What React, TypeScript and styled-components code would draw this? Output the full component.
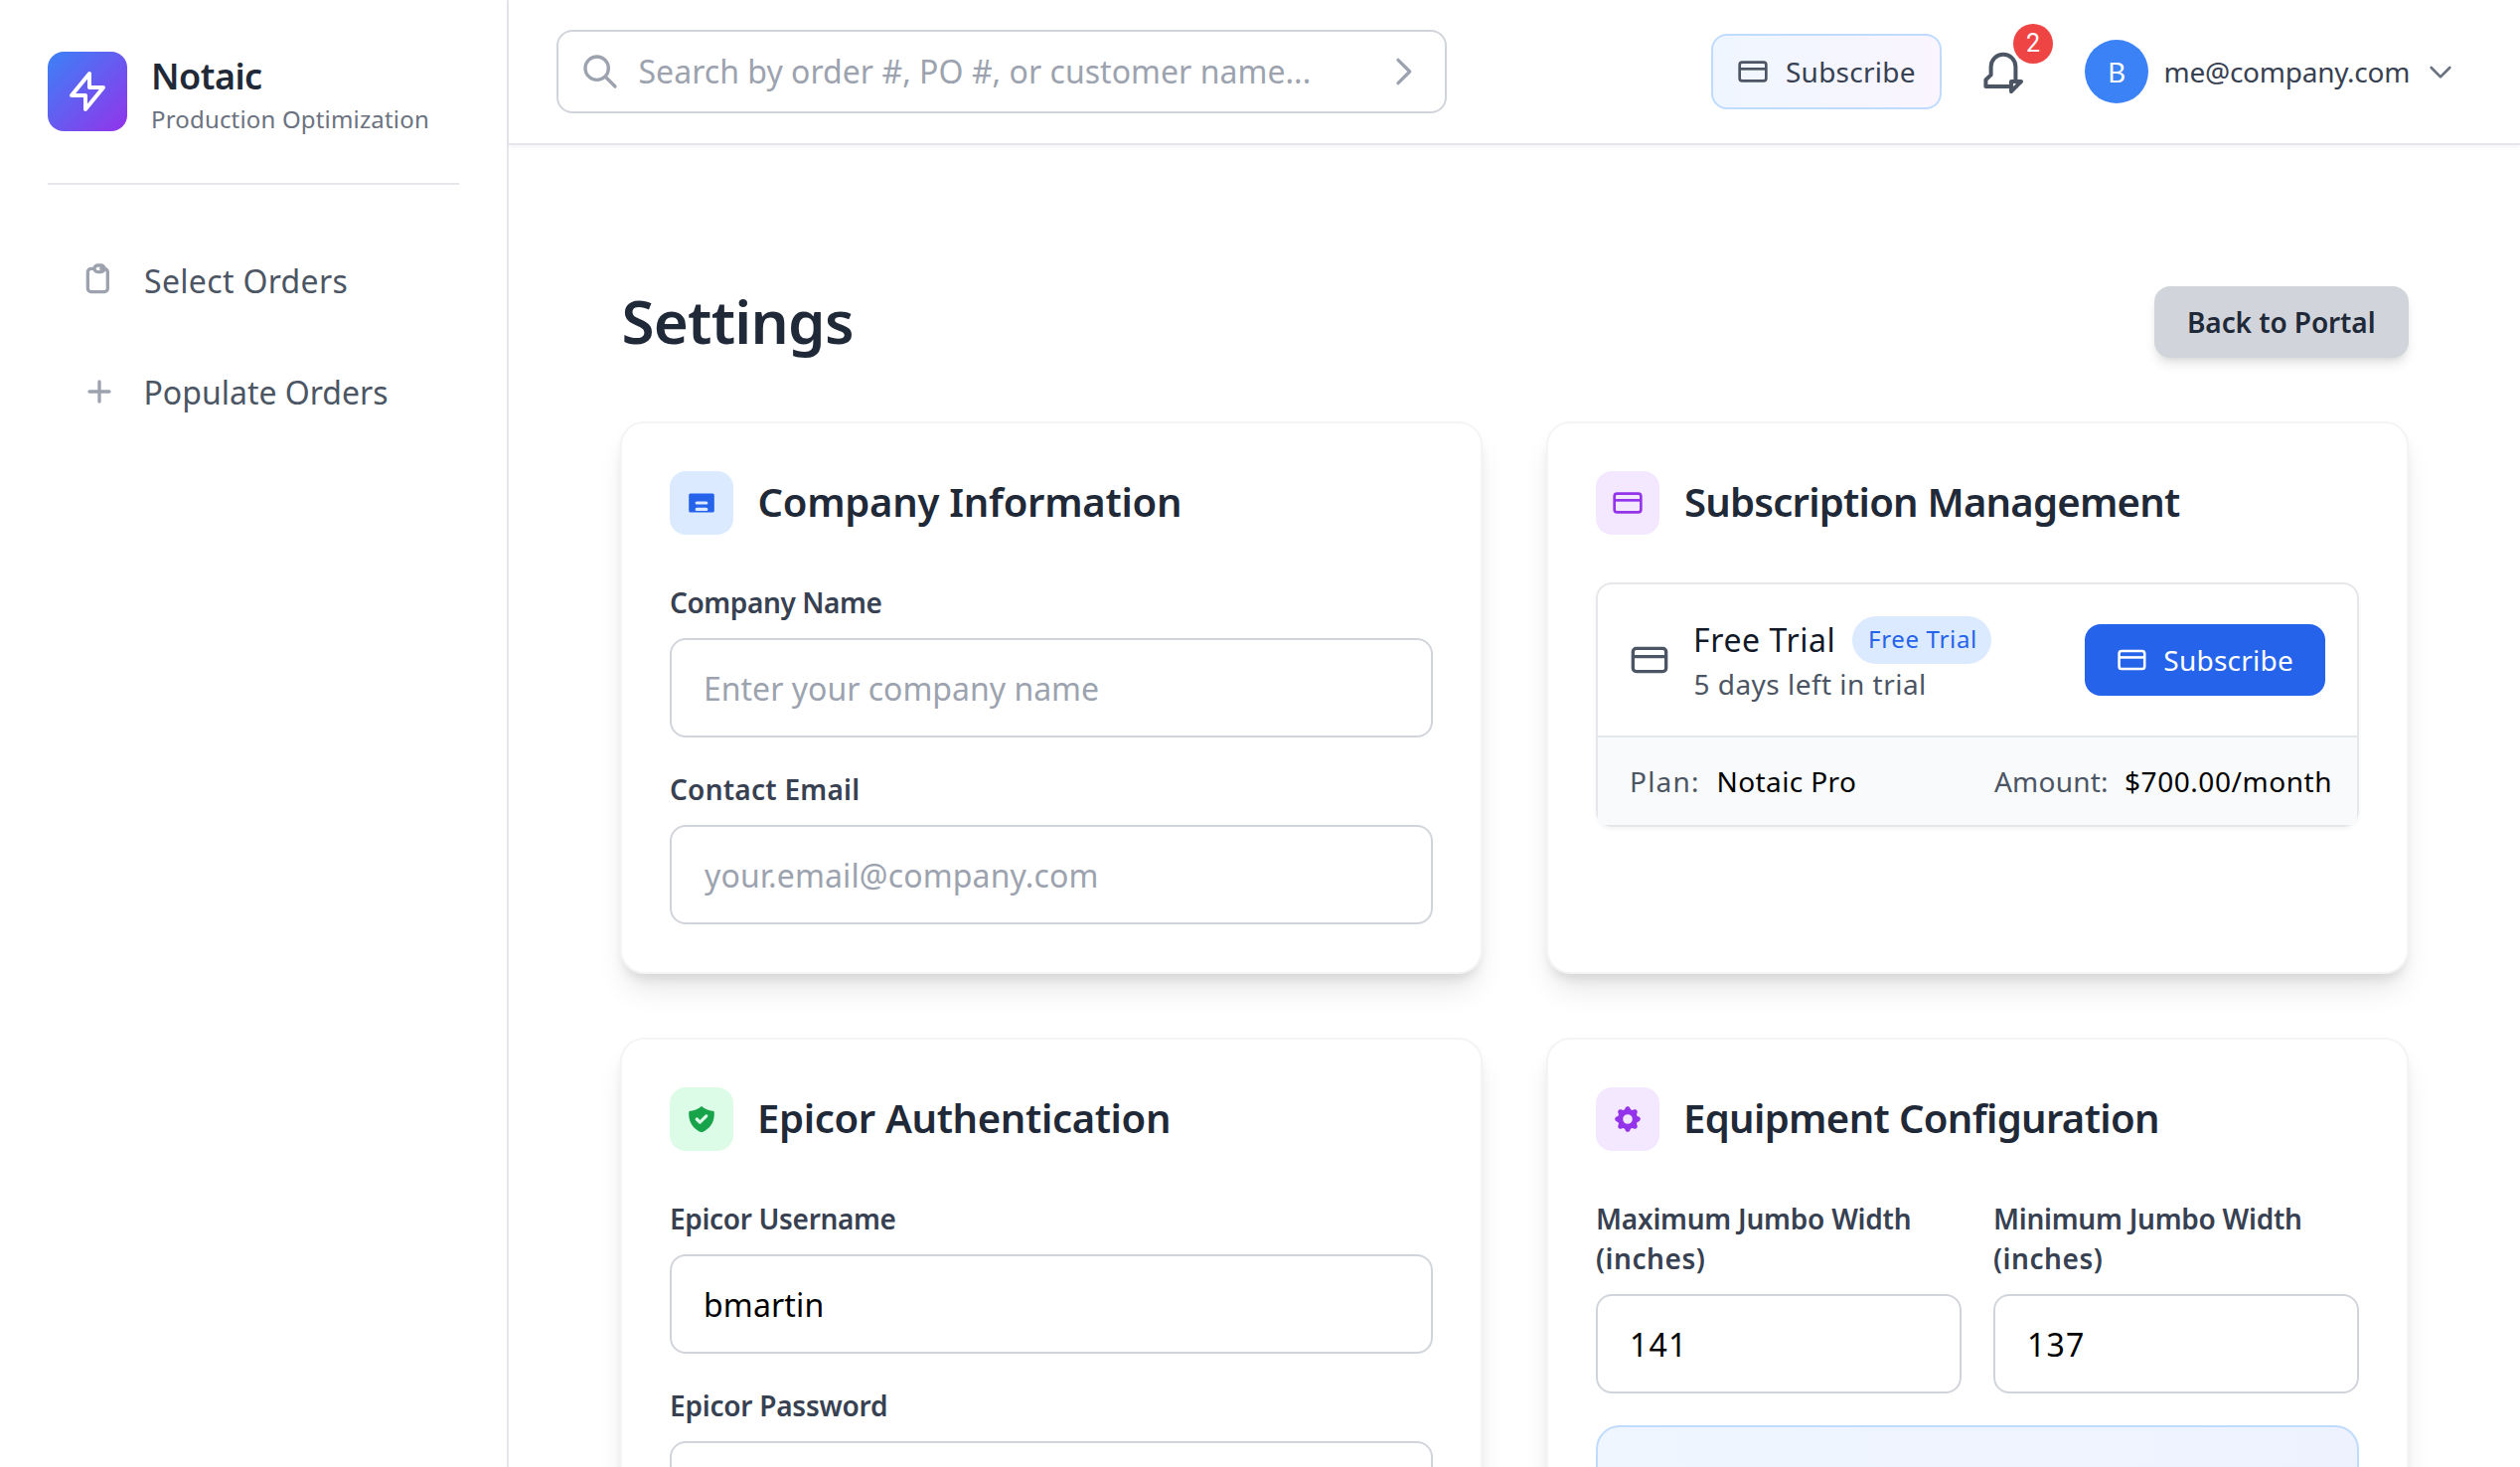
import React from 'react';
import styled, { createGlobalStyle, css } from 'styled-components';

const GlobalStyle = createGlobalStyle`
  *, *::before, *::after { box-sizing: border-box; }
  html, body { margin: 0; height: 100%; overflow: hidden; background: #fff; }
  body { font-family: "Noto Sans", "Open Sans", sans-serif; color: #111827; }
  button, input { font-family: inherit; }
`;

/* ---------- text ---------- */

interface TextProps {
  $track?: number;
  $shift?: number;
}

const textFit = css<TextProps>`
  letter-spacing: ${p => p.$track ?? 0}px;
  text-indent: ${p => p.$shift ?? 0}px;
  white-space: nowrap;
`;

const BodyText = styled.span<TextProps>`
  ${textFit}
  display: block;
  font-size: 32px;
  line-height: 48px;
`;

const SmallText = styled.span<TextProps & { $color?: string }>`
  ${textFit}
  display: block;
  font-size: 28px;
  line-height: 40px;
  color: ${p => p.$color ?? 'inherit'};
`;

/* ---------- shell ---------- */

const Shell = styled.div`
  display: flex;
  width: 2536px;
  height: 1476px;
  overflow: hidden;
`;

const Sidebar = styled.aside`
  flex: none;
  width: 512px;
  padding: 48px;
  border-right: 2px solid #e5e7eb;
  background: #fff;
`;

const Brand = styled.div`
  display: flex;
  align-items: center;
  gap: 24px;
  height: 138px;
  padding-bottom: 48px;
  border-bottom: 2px solid #e5e7eb;
`;

const Logo = styled.div`
  display: grid;
  place-items: center;
  width: 80px;
  height: 80px;
  border-radius: 16px;
  color: #fff;
  background: linear-gradient(to bottom right, #3b82f6, #9333ea);
`;

const BrandName = styled.div<TextProps>`
  ${textFit}
  padding-top: 1px;
  font-size: 36px;
  line-height: 56px;
  font-weight: 600;
  color: #1f2937;
`;

const BrandTagline = styled.div<TextProps>`
  ${textFit}
  margin-top: -1px;
  font-size: 24px;
  line-height: 32px;
  color: #6b7280;
`;

const Nav = styled.nav`
  display: flex;
  flex-direction: column;
  gap: 16px;
  padding-top: 48px;
`;

const NavItem = styled.a`
  display: flex;
  align-items: center;
  gap: 24px;
  height: 96px;
  padding: 0 32px;
  color: #4b5563;

  svg { color: #9ca3af; }
  ${BodyText} { padding-top: 1px; }
`;

const Page = styled.div`
  flex: 1;
  min-width: 0;
  display: flex;
  flex-direction: column;
`;

/* ---------- header ---------- */

const TopBar = styled.header`
  flex: none;
  display: flex;
  align-items: center;
  justify-content: space-between;
  height: 146px;
  padding: 0 48px;
  border-bottom: 2px solid #e5e7eb;
  box-shadow: 0 2px 4px rgba(0, 0, 0, 0.05);
`;

const SearchBox = styled.div`
  display: flex;
  align-items: center;
  width: 896px;
  height: 84px;
  padding: 0 22px;
  border: 2px solid #d1d5db;
  border-radius: 16px;
  color: #9ca3af;
`;

const SearchInput = styled.input<TextProps>`
  ${textFit}
  flex: 1;
  min-width: 0;
  margin-left: 16px;
  padding: 0;
  border: 0;
  outline: 0;
  background: transparent;
  font-size: 32px;
  line-height: 48px;

  &::placeholder { color: #9ca3af; opacity: 1; }
`;

const Actions = styled.div`
  display: flex;
  align-items: center;
  gap: 24px;
`;

const TrialButton = styled.button`
  display: flex;
  align-items: center;
  gap: 16px;
  width: 232px;
  height: 76px;
  padding: 0 24px;
  border: 2px solid #bfdbfe;
  border-radius: 16px;
  color: #374151;
  background: linear-gradient(to right, #eff6ff, #faf5ff);

  svg { color: #4b5563; }
`;

const BellButton = styled.button`
  position: relative;
  display: block;
  width: 80px;
  height: 80px;
  padding: 16px;
  border: 0;
  background: none;
  color: #4b5563;

  svg { display: block; }
`;

const Badge = styled.span`
  position: absolute;
  top: -8px;
  right: -8px;
  display: grid;
  place-items: center;
  width: 40px;
  height: 40px;
  border-radius: 50%;
  background: #ef4444;
  color: #fff;
  font: 400 25px/32px Roboto, sans-serif;
`;

const UserButton = styled.button`
  display: flex;
  align-items: center;
  gap: 16px;
  padding: 0 16px;
  border: 0;
  background: none;
  color: #374151;

  svg { color: #6b7280; }
`;

const Avatar = styled.span`
  display: grid;
  place-items: center;
  width: 64px;
  height: 64px;
  border-radius: 50%;
  background: #3b82f6;
  color: #fff;
`;

const UserEmail = styled.span`
  width: 246px;
  text-align: left;
`;

/* ---------- content ---------- */

const Content = styled.main`
  width: 1800px;
  margin: 0 auto;
  padding-top: 142px;
`;

const TitleRow = styled.div`
  display: flex;
  align-items: center;
  justify-content: space-between;
  height: 72px;
  margin-bottom: 64px;
`;

const PageTitle = styled.h1<TextProps>`
  ${textFit}
  margin: -2px 0 0;
  font-size: 60px;
  line-height: 72px;
  font-weight: 600;
  color: #1f2937;
`;

const BackButton = styled.button`
  width: 256px;
  height: 72px;
  padding: 0 32px;
  border: 0;
  border-radius: 16px;
  background: #d1d5db;
  color: #1f2937;
  font-weight: 600;
  text-align: left;
  box-shadow: 0 8px 12px -2px rgba(0, 0, 0, 0.1), 0 4px 8px -4px rgba(0, 0, 0, 0.1);
`;

const CardGrid = styled.div`
  display: grid;
  grid-template-columns: repeat(2, minmax(0, 1fr));
  gap: 64px;
`;

const Card = styled.section`
  padding: 48px;
  border: 2px solid #f3f4f6;
  border-radius: 24px;
  background: #fff;
  box-shadow: 0 20px 30px -6px rgba(0, 0, 0, 0.1), 0 8px 12px -4px rgba(0, 0, 0, 0.1);
`;

const CardHeader = styled.div`
  display: flex;
  align-items: center;
  gap: 24px;
  margin-bottom: 48px;
`;

const IconTile = styled.div<{ $bg: string; $fg: string }>`
  display: grid;
  place-items: center;
  width: 64px;
  height: 64px;
  border-radius: 16px;
  background: ${p => p.$bg};
  color: ${p => p.$fg};
`;

const CardTitle = styled.h2<TextProps>`
  ${textFit}
  margin: -2px 0 0;
  font-size: 40px;
  line-height: 56px;
  font-weight: 600;
  color: #1f2937;
`;

const Fields = styled.div`
  display: flex;
  flex-direction: column;
  gap: 32px;
`;

const FieldLabel = styled.label`
  display: block;
  margin-bottom: 16px;
  font-weight: 600;
  color: #374151;
`;

const FieldInput = styled.input<TextProps>`
  ${textFit}
  display: block;
  width: 100%;
  height: 100px;
  padding: 0 32px;
  border: 2px solid #d1d5db;
  border-radius: 16px;
  outline: 0;
  background: #fff;
  color: #000;
  font-size: 32px;
  line-height: 48px;

  &::placeholder { color: #9ca3af; opacity: 1; }
`;

const TwoColumns = styled.div`
  display: grid;
  grid-template-columns: repeat(2, minmax(0, 1fr));
  gap: 32px;
`;

const Callout = styled.div`
  height: 240px;
  border: 2px solid #bfdbfe;
  border-radius: 24px;
  background: linear-gradient(to right, #eff6ff, #eef2ff);
`;

/* ---------- subscription ---------- */

const PlanPanel = styled.div`
  border: 2px solid #e5e7eb;
  border-radius: 16px;
  box-shadow: 0 2px 4px rgba(0, 0, 0, 0.05);
`;

const PlanSummary = styled.div`
  display: flex;
  align-items: center;
  gap: 24px;
  padding: 32px;
  color: #4b5563;
`;

const PlanText = styled.div`
  flex: 1;
`;

const PlanName = styled.div`
  display: flex;
  align-items: center;
  color: #111827;
`;

const PlanNameLabel = styled.div`
  width: 160px;
`;

const Pill = styled.span<TextProps>`
  ${textFit}
  width: 140px;
  height: 48px;
  padding: 7px 16px 9px;
  border-radius: 24px;
  background: #dbeafe;
  color: #2563eb;
  font-size: 24px;
  line-height: 32px;
`;

const SubscribeButton = styled.button`
  display: flex;
  align-items: center;
  gap: 16px;
  width: 242px;
  height: 72px;
  padding: 0 32px;
  border: 0;
  border-radius: 16px;
  background: #2563eb;
  color: #fff;
`;

const PlanDetails = styled.dl`
  display: grid;
  grid-template-columns: repeat(2, minmax(0, 1fr));
  gap: 32px;
  margin: 0;
  padding: 24px 32px;
  border-top: 2px solid #e5e7eb;
  background: #f9fafb;
`;

const Detail = styled.div<{ $label: number }>`
  display: grid;
  grid-template-columns: ${p => p.$label}px auto;
`;

/* ---------- icons ---------- */

interface StrokeIconProps {
  size: number;
  d: string;
}

const StrokeIcon = ({ size, d }: StrokeIconProps) => (
  <svg width={size} height={size} viewBox="0 0 24 24" fill="none" stroke="currentColor" strokeWidth="2" strokeLinecap="round" strokeLinejoin="round">
    <path d={d} />
  </svg>
);

const PATHS = {
  bolt: 'M13 10V3L4 14h7v7l9-11h-7z',
  clipboard:
    'M9 5H7a2 2 0 00-2 2v10a2 2 0 002 2h8a2 2 0 002-2V7a2 2 0 00-2-2h-2M9 5a2 2 0 002 2h2a2 2 0 002-2M9 5a2 2 0 012-2h2a2 2 0 012 2',
  plus: 'M12 6v6m0 0v6m0-6h6m-6 0H6',
  search: 'M21 21l-6-6m2-5a7 7 0 11-14 0 7 7 0 0114 0z',
  right: 'M9 5l7 7-7 7',
  down: 'M19 9l-7 7-7-7',
  bell: 'M15 17h5l-5 5v-5zM17.2 17V9.6a6.2 6.2 0 0 0-12.4 0v4.1L2.2 16.1v3.4H15',
};

const CardIcon = ({ size }: { size: number }) => (
  <svg width={size} height={size} viewBox="0 0 24 24" fill="none" stroke="currentColor" strokeWidth="2">
    <rect x="2" y="5" width="20" height="14" rx="2" />
    <path d="M2 10h20" />
  </svg>
);

const IdCardIcon = () => (
  <svg width="32" height="32" viewBox="0 0 20 20" fill="currentColor" fillRule="evenodd">
    <path d="M3 4a1 1 0 00-1 1v10a1 1 0 001 1h14a1 1 0 001-1V5a1 1 0 00-1-1H3zM7 9h6a1 1 0 010 2H7a1 1 0 010-2zM7 13h6a1 1 0 010 2H7a1 1 0 010-2z" />
  </svg>
);

const ShieldIcon = () => (
  <svg width="32" height="32" viewBox="0 0 20 20" fill="currentColor" fillRule="evenodd">
    <path d="M2.166 4.999A11.954 11.954 0 0010 1.944 11.954 11.954 0 0017.834 5c.11.65.166 1.32.166 2.001 0 5.225-3.34 9.67-8 11.317C5.34 16.67 2 12.225 2 7c0-.682.057-1.35.166-2.001zm11.541 3.708a1 1 0 00-1.414-1.414L9 10.586 7.707 9.293a1 1 0 00-1.414 1.414l2 2a1 1 0 001.414 0l4-4z" />
  </svg>
);

const GearIcon = () => (
  <svg width="32" height="32" viewBox="0 0 20 20" fill="currentColor" fillRule="evenodd">
    <path d="M11.49 3.17c-.38-1.56-2.6-1.56-2.98 0a1.532 1.532 0 01-2.286.948c-1.372-.836-2.942.734-2.106 2.106.54.886.061 2.042-.947 2.287-1.561.379-1.561 2.6 0 2.978a1.532 1.532 0 01.947 2.287c-.836 1.372.734 2.942 2.106 2.106a1.532 1.532 0 012.287.947c.379 1.561 2.6 1.561 2.978 0a1.533 1.533 0 012.287-.947c1.372.836 2.942-.734 2.106-2.106a1.533 1.533 0 01.947-2.287c1.561-.379 1.561-2.6 0-2.978a1.532 1.532 0 01-.947-2.287c.836-1.372-.734-2.942-2.106-2.106a1.532 1.532 0 01-2.287-.947zM10 13a3 3 0 100-6 3 3 0 000 6z" />
  </svg>
);

/* ---------- composed parts ---------- */

interface FieldProps {
  label: string;
  labelTrack?: number;
  labelSecondLine?: string;
  placeholder?: string;
  value?: string;
  track?: number;
  shift?: number;
}

const Field = ({ label, labelTrack, labelSecondLine, placeholder, value, track, shift }: FieldProps) => (
  <div>
    <FieldLabel>
      <SmallText $track={labelTrack}>{label}</SmallText>
      {labelSecondLine && <SmallText $track={0.55}>{labelSecondLine}</SmallText>}
    </FieldLabel>
    <FieldInput placeholder={placeholder} defaultValue={value} $track={track} $shift={shift} />
  </div>
);

interface SettingsCardProps {
  title: string;
  track: number;
  shift?: number;
  icon: React.ReactNode;
  bg: string;
  fg: string;
  children: React.ReactNode;
}

const SettingsCard = ({ title, track, shift, icon, bg, fg, children }: SettingsCardProps) => (
  <Card>
    <CardHeader>
      <IconTile $bg={bg} $fg={fg}>{icon}</IconTile>
      <CardTitle $track={track} $shift={shift}>{title}</CardTitle>
    </CardHeader>
    {children}
  </Card>
);

export default function App() {
  return (
    <Shell>
      <GlobalStyle />
      <Sidebar>
        <Brand>
          <Logo><StrokeIcon size={48} d={PATHS.bolt} /></Logo>
          <div>
            <BrandName $track={-0.5}>Notaic</BrandName>
            <BrandTagline $track={0.17}>Production Optimization</BrandTagline>
          </div>
        </Brand>
        <Nav>
          <NavItem>
            <StrokeIcon size={40} d={PATHS.clipboard} />
            <BodyText $track={0.32} $shift={1}>Select Orders</BodyText>
          </NavItem>
          <NavItem>
            <StrokeIcon size={40} d={PATHS.plus} />
            <BodyText $shift={0.5}>Populate Orders</BodyText>
          </NavItem>
        </Nav>
      </Sidebar>

      <Page>
        <TopBar>
          <SearchBox>
            <StrokeIcon size={40} d={PATHS.search} />
            <SearchInput placeholder="Search by order #, PO #, or customer name..." $track={0.03} $shift={2.5} />
            <StrokeIcon size={40} d={PATHS.right} />
          </SearchBox>
          <Actions>
            <TrialButton>
              <CardIcon size={32} />
              <SmallText $track={0.24} $shift={1}>Subscribe</SmallText>
            </TrialButton>
            <BellButton>
              <StrokeIcon size={48} d={PATHS.bell} />
              <Badge>2</Badge>
            </BellButton>
            <UserButton>
              <Avatar><SmallText>B</SmallText></Avatar>
              <UserEmail><SmallText $track={-0.25} $shift={-0.5}>me@company.com</SmallText></UserEmail>
              <StrokeIcon size={32} d={PATHS.down} />
            </UserButton>
          </Actions>
        </TopBar>

        <Content>
          <TitleRow>
            <PageTitle $track={-0.75} $shift={1.5}>Settings</PageTitle>
            <BackButton><SmallText $track={-0.1} $shift={1}>Back to Portal</SmallText></BackButton>
          </TitleRow>

          <CardGrid>
            <SettingsCard title="Company Information" track={-0.26} shift={0.5} icon={<IdCardIcon />} bg="#dbeafe" fg="#2563eb">
              <Fields>
                <Field label="Company Name" labelTrack={-0.4} placeholder="Enter your company name" />
                <Field label="Contact Email" labelTrack={0.25} placeholder="your.email@company.com" track={0.13} shift={1} />
              </Fields>
            </SettingsCard>

            <SettingsCard title="Subscription Management" track={-0.75} shift={1} icon={<CardIcon size={32} />} bg="#f3e8ff" fg="#9333ea">
              <PlanPanel>
                <PlanSummary>
                  <CardIcon size={40} />
                  <PlanText>
                    <PlanName>
                      <PlanNameLabel><BodyText $track={0.6}>Free Trial</BodyText></PlanNameLabel>
                      <Pill $track={0.68}>Free Trial</Pill>
                    </PlanName>
                    <SmallText $track={0.47} $shift={0.5}>5 days left in trial</SmallText>
                  </PlanText>
                  <SubscribeButton>
                    <CardIcon size={32} />
                    <SmallText $track={0.24} $shift={0.5}>Subscribe</SmallText>
                  </SubscribeButton>
                </PlanSummary>
                <PlanDetails>
                  <Detail $label={88}>
                    <SmallText $track={1.2} $color="#4b5563">Plan:</SmallText>
                    <SmallText $track={0.4} $shift={-0.5} $color="#000">Notaic Pro</SmallText>
                  </Detail>
                  <Detail $label={132}>
                    <SmallText $track={0.21} $shift={1} $color="#4b5563">Amount:</SmallText>
                    <SmallText $track={0.55} $color="#000">$700.00/month</SmallText>
                  </Detail>
                </PlanDetails>
              </PlanPanel>
            </SettingsCard>

            <SettingsCard title="Epicor Authentication" track={-0.33} icon={<ShieldIcon />} bg="#dcfce7" fg="#16a34a">
              <Fields>
                <Field label="Epicor Username" labelTrack={-0.33} value="bmartin" track={0.15} />
                <Field label="Epicor Password" labelTrack={-0.23} />
              </Fields>
            </SettingsCard>

            <SettingsCard title="Equipment Configuration" track={-0.63} icon={<GearIcon />} bg="#f3e8ff" fg="#9333ea">
              <Fields>
                <TwoColumns>
                  <Field label="Maximum Jumbo Width" labelTrack={-0.23} labelSecondLine="(inches)" value="141" track={1.2} />
                  <Field label="Minimum Jumbo Width" labelTrack={-0.25} labelSecondLine="(inches)" value="137" track={1.2} />
                </TwoColumns>
                <Callout />
              </Fields>
            </SettingsCard>
          </CardGrid>
        </Content>
      </Page>
    </Shell>
  );
}
